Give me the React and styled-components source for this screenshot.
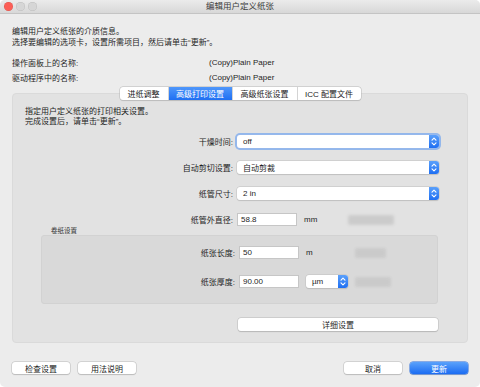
import React from 'react';
import styled, { createGlobalStyle } from 'styled-components';

const GlobalStyle = createGlobalStyle`
  html, body {
    margin: 0;
    padding: 0;
    background: #ffffff;
  }
  body {
    font-family: "Liberation Sans", "Noto Sans CJK SC", sans-serif;
    color: #1e1e1e;
  }
`;

const Stepper = () => (
  <svg width="6" height="9" viewBox="0 0 6 9">
    <path d="M1 3.2 L3 1.2 L5 3.2 M1 5.8 L3 7.8 L5 5.8" fill="none" stroke="#fff" strokeWidth="1.1" strokeLinecap="round" strokeLinejoin="round" />
  </svg>
);

const App = () => {
  const tabs = [
    { name: '进纸调整', w: 48 },
    { name: '高级打印设置', w: 63 },
    { name: '高级纸张设置', w: 64 },
    { name: 'ICC 配置文件', w: 63 },
  ];

  return (
    <Window>
      <GlobalStyle />
      <TitleBar>
        <Lights>
          <Light color="#fc5f57" />
          <Light color="#d6d6d6" />
          <Light color="#d6d6d6" />
        </Lights>
        <Title>编辑用户定义纸张</Title>
      </TitleBar>

      <Content>
        <Intro>
          <div>编辑用户定义纸张的介质信息。</div>
          <div>选择要编辑的选项卡，设置所需项目，然后请单击“更新”。</div>
        </Intro>

        <Names>
          <span>操作面板上的名称:</span>
          <span>(Copy)Plain Paper</span>
          <span>驱动程序中的名称:</span>
          <span>(Copy)Plain Paper</span>
        </Names>

        <Tabs>
          {tabs.map((t, i) => (
            <Tab key={t.name} active={i === 1} width={t.w}>{t.name}</Tab>
          ))}
        </Tabs>

        <Panel>
          <PanelText>
            <div>指定用户定义纸张的打印相关设置。</div>
            <div>完成设置后，请单击“更新”。</div>
          </PanelText>

          <Rows>
            <Row>
              <Label width={212}>干燥时间:</Label>
              <Select width={202} focused>
                <SelectValue>off</SelectValue>
                <StepperBox><Stepper /></StepperBox>
              </Select>
            </Row>
            <Row>
              <Label width={212}>自动剪切设置:</Label>
              <Select width={202}>
                <SelectValue>自动剪裁</SelectValue>
                <StepperBox><Stepper /></StepperBox>
              </Select>
            </Row>
            <Row>
              <Label width={212}>纸管尺寸:</Label>
              <Select width={202}>
                <SelectValue>2 in</SelectValue>
                <StepperBox><Stepper /></StepperBox>
              </Select>
            </Row>
            <Row>
              <Label width={212}>纸管外直径:</Label>
              <Input>58.8</Input>
              <Unit width={44}>mm</Unit>
              <Blur width={46} />
            </Row>
          </Rows>

          <GroupLabel>卷纸设置</GroupLabel>
          <Group>
            <Row>
              <Label width={197}>纸张长度:</Label>
              <Input>50</Input>
              <Unit width={49}>m</Unit>
              <Blur width={31} />
            </Row>
            <Row>
              <Label width={197}>纸张厚度:</Label>
              <Input>90.00</Input>
              <Select width={42} small>
                <SelectValue>µm</SelectValue>
                <StepperBox><Stepper /></StepperBox>
              </Select>
              <Blur width={36} />
            </Row>
          </Group>

          <DetailButton>详细设置</DetailButton>
        </Panel>

        <Footer>
          <Button>检查设置</Button>
          <Button>用法说明</Button>
          <Spacer />
          <Button>取消</Button>
          <Button primary>更新</Button>
        </Footer>
      </Content>
    </Window>
  );
};

export default App;

const Window = styled.div`
  width: 480px;
  height: 387px;
  box-sizing: border-box;
  background: #ececec;
  border-radius: 5px;
  overflow: hidden;
  display: flex;
  flex-direction: column;
  font-size: 8px;
`;

const TitleBar = styled.div`
  height: 14px;
  flex-shrink: 0;
  position: relative;
  display: flex;
  align-items: center;
  justify-content: center;
  background: linear-gradient(#ebebeb, #d8d8d8);
  border-bottom: 1px solid #c4c4c4;
  box-sizing: border-box;
`;

const Lights = styled.div`
  position: absolute;
  left: 4px;
  top: 2px;
  display: flex;
  gap: 3px;
`;

const Light = styled.span`
  width: 9px;
  height: 9px;
  border-radius: 50%;
  background: ${(p) => p.color};
  box-shadow: inset 0 0 0 0.5px rgba(0, 0, 0, 0.12);
`;

const Title = styled.div`
  font-size: 8.5px;
  color: #3a3a3a;
  line-height: 1;
`;

const Content = styled.div`
  flex: 1;
  display: flex;
  flex-direction: column;
  padding: 0 12px;
`;

const Intro = styled.div`
  margin-top: 12px;
  line-height: 11px;
`;

const Names = styled.div`
  margin-top: 7px;
  display: grid;
  grid-template-columns: 197px 1fr;
  grid-auto-rows: 15px;
  align-items: center;
`;

const Tabs = styled.div`
  margin: 2px auto -7px;
  position: relative;
  z-index: 1;
  display: flex;
  height: 13px;
  background: #fff;
  border-radius: 3px;
  box-shadow: 0 0 0 0.5px #b9b9b9, 0 0.5px 1px rgba(0, 0, 0, 0.15);
  overflow: hidden;
`;

const Tab = styled.div`
  width: ${(p) => p.width}px;
  display: flex;
  align-items: center;
  justify-content: center;
  font-size: 8px;
  color: ${(p) => (p.active ? '#fff' : '#222')};
  background: ${(p) => (p.active ? 'linear-gradient(#4f97fb, #1f6ff2)' : 'transparent')};
  & + & {
    border-left: 1px solid #d4d4d4;
  }
`;

const Panel = styled.div`
  height: 250px;
  box-sizing: border-box;
  background: #e2e2e2;
  border: 1px solid #dadada;
  border-radius: 4px;
  padding: 13px 12px 0 12px;
`;

const PanelText = styled.div`
  line-height: 10px;
`;

const Rows = styled.div`
  margin-top: 8px;
  display: flex;
  flex-direction: column;
  gap: 13px;
`;

const Row = styled.div`
  display: flex;
  align-items: center;
  height: 13px;
`;

const Label = styled.div`
  width: ${(p) => p.width}px;
  text-align: right;
  padding-right: 4px;
  box-sizing: border-box;
  flex-shrink: 0;
`;

const Select = styled.div`
  width: ${(p) => p.width}px;
  height: 13px;
  box-sizing: border-box;
  display: flex;
  align-items: center;
  background: #fff;
  border-radius: 3px;
  box-shadow: ${(p) =>
    p.focused
      ? '0 0 0 0.5px #9ab9ee, 0 0 0 2px rgba(82, 148, 242, 0.55)'
      : '0 0 0 0.5px #c2c2c2, 0 0.5px 1px rgba(0, 0, 0, 0.15)'};
  margin-left: ${(p) => (p.small ? '7px' : '0')};
`;

const SelectValue = styled.div`
  flex: 1;
  padding-left: 6px;
`;

const StepperBox = styled.div`
  width: 10px;
  height: 100%;
  display: flex;
  align-items: center;
  justify-content: center;
  border-radius: 0 3px 3px 0;
  background: linear-gradient(#5aa0fb, #1f6ff2);
`;

const Input = styled.div`
  width: 60px;
  height: 13px;
  box-sizing: border-box;
  background: #fff;
  border: 1px solid #c6c6c6;
  padding-left: 3px;
  display: flex;
  align-items: center;
  flex-shrink: 0;
`;

const Unit = styled.div`
  width: ${(p) => p.width}px;
  padding-left: 7px;
  box-sizing: border-box;
  flex-shrink: 0;
`;

const Blur = styled.div`
  width: ${(p) => p.width}px;
  height: 10px;
  margin-left: 7px;
  background: #c8c8c8;
  border-radius: 2px;
  filter: blur(1.5px);
  opacity: 0.85;
  &:first-child {
    margin-left: 0;
  }
`;

const GroupLabel = styled.div`
  margin: 1px 0 0 26px;
  font-size: 6.5px;
  line-height: 8px;
  color: #333;
`;

const Group = styled.div`
  margin-left: 16px;
  width: 397px;
  box-sizing: border-box;
  background: #d9d9d9;
  border: 1px solid #d2d2d2;
  border-radius: 3px;
  padding: 10px 0 15px;
  display: flex;
  flex-direction: column;
  gap: 16px;
`;

const DetailButton = styled.div`
  margin: 14px 0 0 213px;
  width: 200px;
  height: 13px;
  display: flex;
  align-items: center;
  justify-content: center;
  background: #fff;
  border-radius: 3px;
  box-shadow: 0 0 0 0.5px #bdbdbd, 0 0.5px 1px rgba(0, 0, 0, 0.2);
`;

const Footer = styled.div`
  margin-top: 19px;
  display: flex;
  align-items: center;
  gap: 8px;
`;

const Spacer = styled.div`
  flex: 1;
`;

const Button = styled.div`
  width: 58px;
  height: 12px;
  display: flex;
  align-items: center;
  justify-content: center;
  border-radius: 3px;
  color: ${(p) => (p.primary ? '#fff' : '#222')};
  background: ${(p) => (p.primary ? 'linear-gradient(#5aa2fb, #1b6cf2)' : '#fff')};
  box-shadow: ${(p) =>
    p.primary
      ? '0 0 0 0.5px #2a6fe0, 0 0.5px 1px rgba(0, 0, 0, 0.2)'
      : '0 0 0 0.5px #bdbdbd, 0 0.5px 1px rgba(0, 0, 0, 0.2)'};
`;
